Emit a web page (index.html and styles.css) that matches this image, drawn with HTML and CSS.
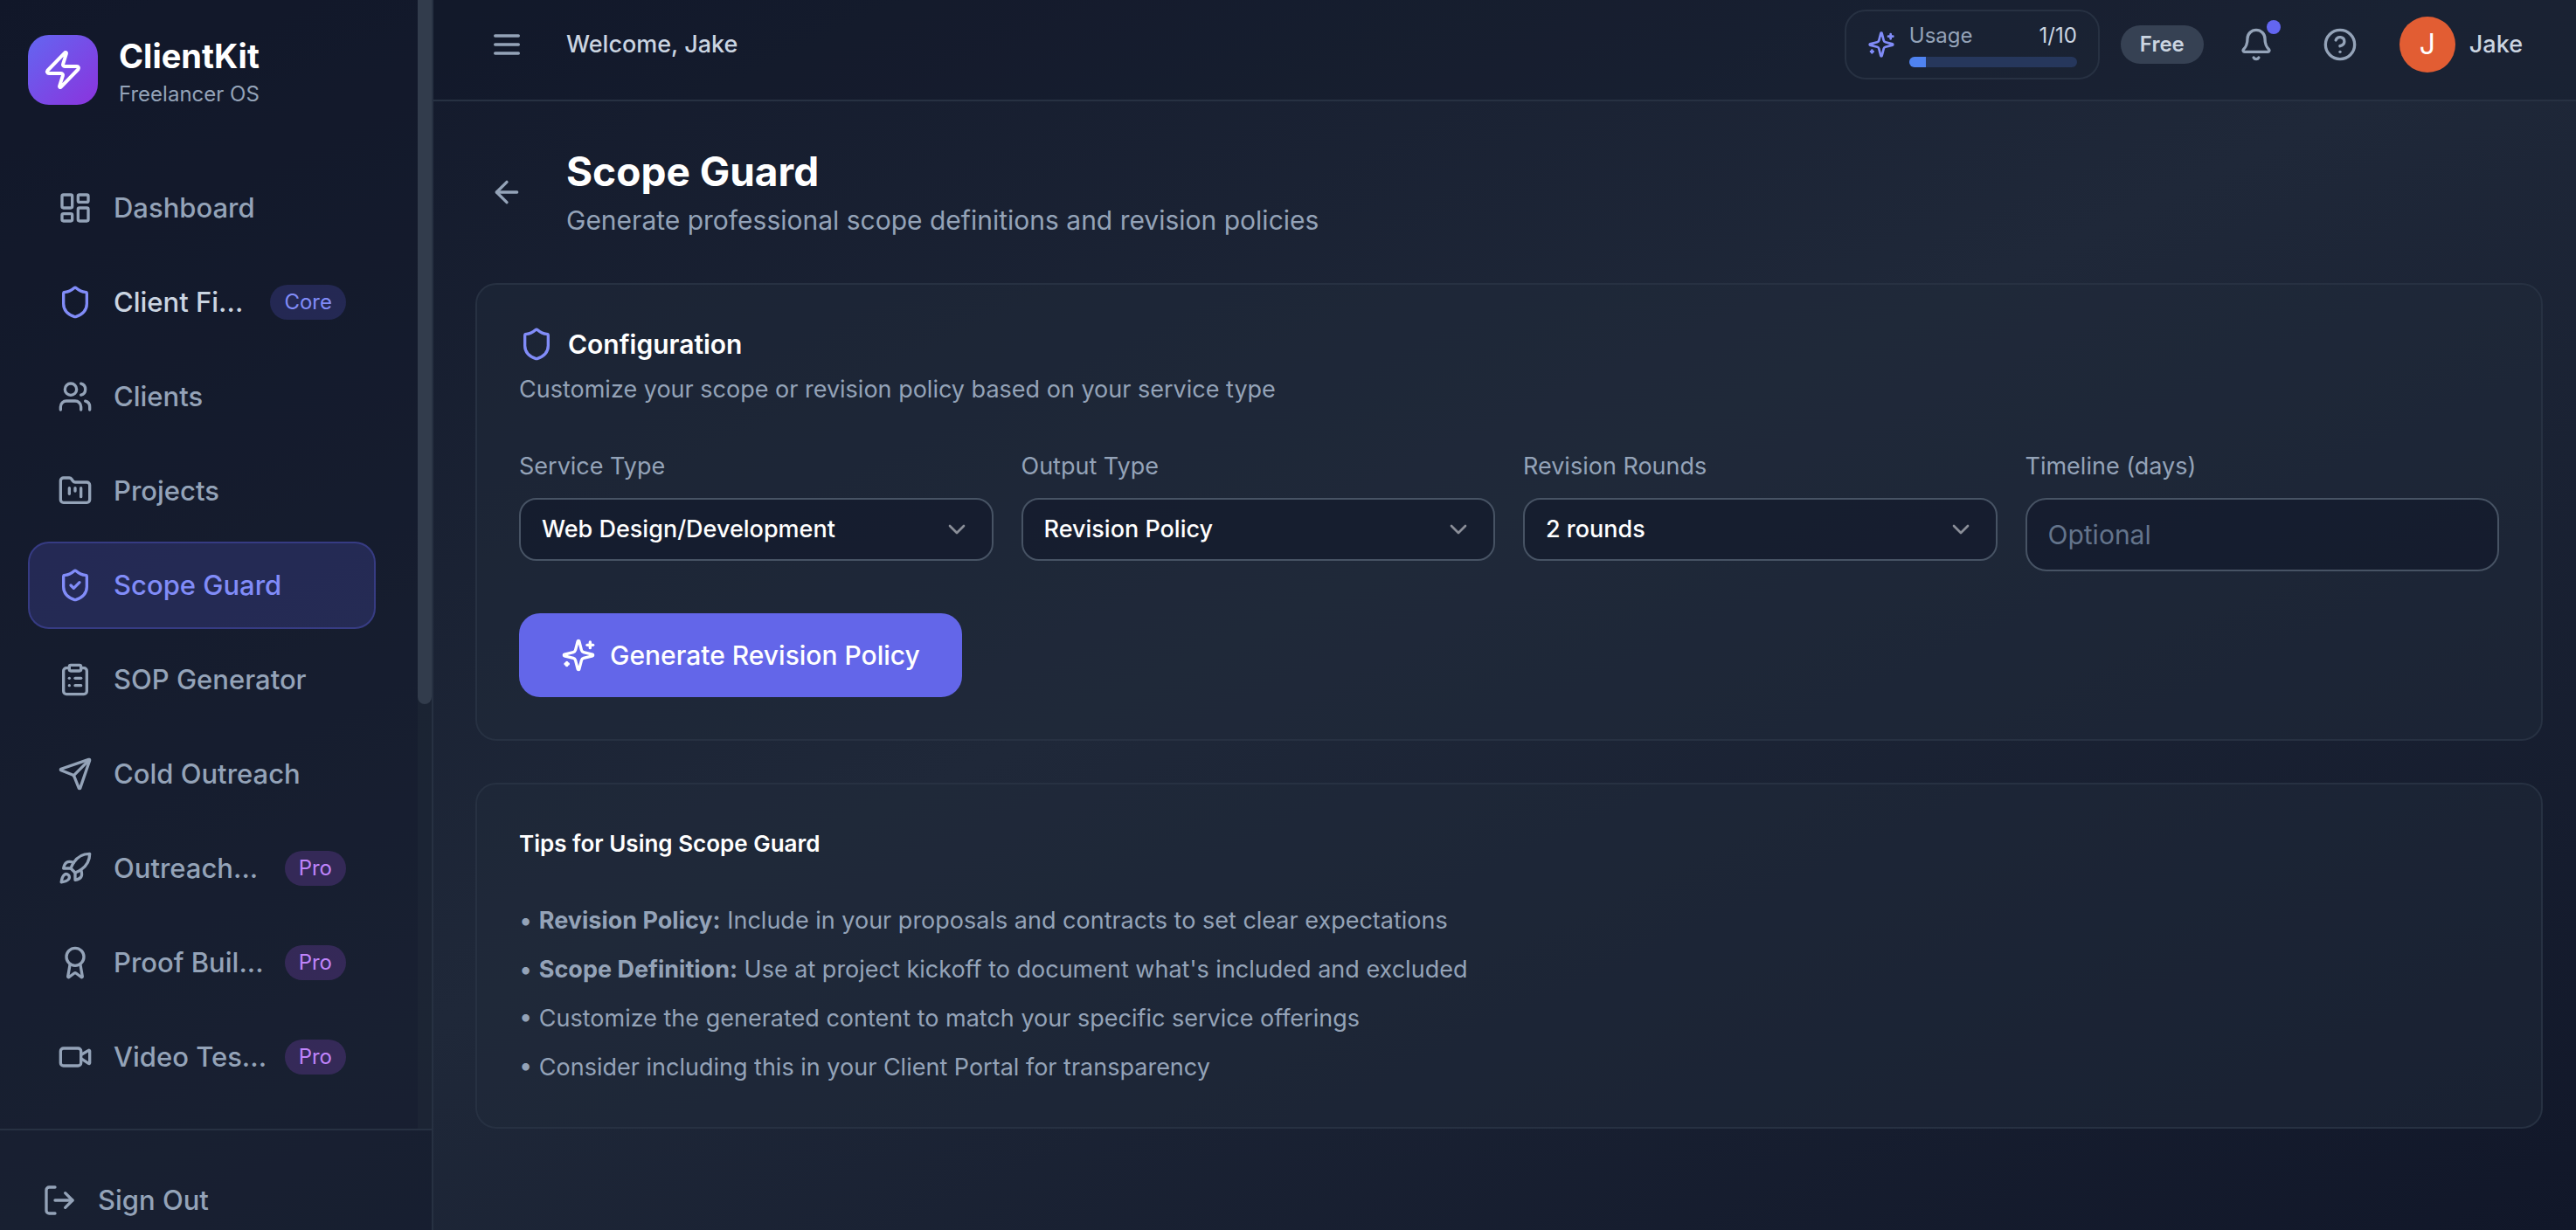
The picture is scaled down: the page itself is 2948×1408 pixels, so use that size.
FILE: index.html
```html
<!DOCTYPE html>
<html lang="en">
<head>
<meta charset="utf-8">
<meta name="viewport" content="width=device-width, initial-scale=1">
<title>Scope Guard - ClientKit</title>
<link rel="stylesheet" href="styles.css">
</head>
<body>
<svg class="sprite" aria-hidden="true">
  <symbol id="sparkles" viewBox="0 0 24 24"><path d="M9.937 15.5A2 2 0 0 0 8.5 14.063l-6.135-1.582a.5.5 0 0 1 0-.962L8.5 9.936A2 2 0 0 0 9.937 8.5l1.582-6.135a.5.5 0 0 1 .963 0L14.063 8.5A2 2 0 0 0 15.5 9.937l6.135 1.581a.5.5 0 0 1 0 .964L15.5 14.063a2 2 0 0 0-1.437 1.437l-1.582 6.135a.5.5 0 0 1-.963 0z"/><path d="M20 3v4"/><path d="M22 5h-4"/><path d="M4 17v2"/><path d="M5 18H3"/></symbol>
  <symbol id="shield" viewBox="0 0 24 24"><path d="M20 13c0 5-3.5 7.5-7.66 8.95a1 1 0 0 1-.67-.01C7.5 20.5 4 18 4 13V6a1 1 0 0 1 1-1c2 0 4.5-1.2 6.24-2.72a1.17 1.17 0 0 1 1.52 0C14.51 3.81 17 5 19 5a1 1 0 0 1 1 1z"/></symbol>
  <symbol id="chevron" viewBox="0 0 24 24"><path d="m6 9 6 6 6-6"/></symbol>
</svg>
<div class="app">
  <aside class="sidebar">
    <div class="sidebar-scroll">
      <div class="sidebar-content">
        <div class="brand">
          <span class="brand-logo"><svg class="icon icon-lg" viewBox="0 0 24 24"><path d="M4 14a1 1 0 0 1-.78-1.63l9.9-10.2a.5.5 0 0 1 .86.46l-1.92 6.02A1 1 0 0 0 13 10h7a1 1 0 0 1 .78 1.63l-9.9 10.2a.5.5 0 0 1-.86-.46l1.92-6.02A1 1 0 0 0 11 14z"/></svg></span>
          <div class="brand-text">
            <span class="brand-name">ClientKit</span>
            <span class="brand-tagline">Freelancer OS</span>
          </div>
        </div>
        <nav class="nav">
          <a class="nav-item" href="#"><svg class="icon" viewBox="0 0 24 24"><rect width="7" height="9" x="3" y="3" rx="1"/><rect width="7" height="5" x="14" y="3" rx="1"/><rect width="7" height="9" x="14" y="12" rx="1"/><rect width="7" height="5" x="3" y="16" rx="1"/></svg><span class="nav-label">Dashboard</span></a>
          <a class="nav-item nav-item-core" href="#"><svg class="icon"><use href="#shield"/></svg><span class="nav-label">Client Fi...</span><span class="badge badge-core">Core</span></a>
          <a class="nav-item" href="#"><svg class="icon" viewBox="0 0 24 24"><path d="M16 21v-2a4 4 0 0 0-4-4H6a4 4 0 0 0-4 4v2"/><circle cx="9" cy="7" r="4"/><path d="M22 21v-2a4 4 0 0 0-3-3.87"/><path d="M16 3.13a4 4 0 0 1 0 7.75"/></svg><span class="nav-label">Clients</span></a>
          <a class="nav-item" href="#"><svg class="icon" viewBox="0 0 24 24"><path d="M4 20h16a2 2 0 0 0 2-2V8a2 2 0 0 0-2-2h-7.93a2 2 0 0 1-1.66-.9l-.82-1.2A2 2 0 0 0 7.93 3H4a2 2 0 0 0-2 2v13c0 1.1.9 2 2 2Z"/><path d="M8 10v4"/><path d="M12 10v2"/><path d="M16 10v6"/></svg><span class="nav-label">Projects</span></a>
          <a class="nav-item nav-item-active" href="#" aria-current="page"><svg class="icon" viewBox="0 0 24 24"><path d="M20 13c0 5-3.5 7.5-7.66 8.95a1 1 0 0 1-.67-.01C7.5 20.5 4 18 4 13V6a1 1 0 0 1 1-1c2 0 4.5-1.2 6.24-2.72a1.17 1.17 0 0 1 1.52 0C14.51 3.81 17 5 19 5a1 1 0 0 1 1 1z"/><path d="m9 12 2 2 4-4"/></svg><span class="nav-label">Scope Guard</span></a>
          <a class="nav-item" href="#"><svg class="icon" viewBox="0 0 24 24"><rect width="8" height="4" x="8" y="2" rx="1"/><path d="M16 4h2a2 2 0 0 1 2 2v14a2 2 0 0 1-2 2H6a2 2 0 0 1-2-2V6a2 2 0 0 1 2-2h2"/><path d="M12 11h4"/><path d="M12 16h4"/><path d="M8 11h.01"/><path d="M8 16h.01"/></svg><span class="nav-label">SOP Generator</span></a>
          <a class="nav-item" href="#"><svg class="icon" viewBox="0 0 24 24"><path d="M14.536 21.686a.5.5 0 0 0 .937-.024l6.5-19a.496.496 0 0 0-.635-.635l-19 6.5a.5.5 0 0 0-.024.937l7.93 3.18a2 2 0 0 1 1.112 1.11z"/><path d="m21.854 2.147-10.94 10.939"/></svg><span class="nav-label">Cold Outreach</span></a>
          <a class="nav-item" href="#"><svg class="icon" viewBox="0 0 24 24"><path d="M4.5 16.5c-1.5 1.26-2 5-2 5s3.74-.5 5-2c.71-.84.7-2.13-.09-2.91a2.18 2.18 0 0 0-2.91-.09z"/><path d="m12 15-3-3a22 22 0 0 1 2-3.95A12.88 12.88 0 0 1 22 2c0 2.72-.78 7.5-6 11a22.35 22.35 0 0 1-4 2z"/><path d="M9 12H4s.55-3.03 2-4c1.62-1.08 5 0 5 0"/><path d="M12 15v5s3.03-.55 4-2c1.08-1.62 0-5 0-5"/></svg><span class="nav-label">Outreach...</span><span class="badge badge-pro">Pro</span></a>
          <a class="nav-item" href="#"><svg class="icon" viewBox="0 0 24 24"><path d="m15.477 12.89 1.515 8.526a.5.5 0 0 1-.81.47l-3.58-2.687a1 1 0 0 0-1.197 0l-3.586 2.686a.5.5 0 0 1-.81-.469l1.514-8.526"/><circle cx="12" cy="8" r="6"/></svg><span class="nav-label">Proof Buil...</span><span class="badge badge-pro">Pro</span></a>
          <a class="nav-item" href="#"><svg class="icon" viewBox="0 0 24 24"><path d="m16 13 5.223 3.482a.5.5 0 0 0 .777-.416V7.87a.5.5 0 0 0-.752-.432L16 10.5"/><rect x="2" y="6" width="14" height="12" rx="2"/></svg><span class="nav-label">Video Tes...</span><span class="badge badge-pro">Pro</span></a>
        </nav>
      </div>
      <div class="scrollbar"><div class="scrollbar-thumb"></div><div class="scrollbar-rest"></div></div>
    </div>
    <div class="sidebar-footer">
      <button class="signout" type="button"><svg class="icon" viewBox="0 0 24 24"><path d="m16 17 5-5-5-5"/><path d="M21 12H9"/><path d="M9 21H5a2 2 0 0 1-2-2V5a2 2 0 0 1 2-2h4"/></svg>Sign Out</button>
    </div>
  </aside>

  <div class="page">
    <header class="topbar">
      <button class="icon-button" type="button" aria-label="Menu"><svg class="icon" viewBox="0 0 24 24"><path d="M4 6h16"/><path d="M4 12h16"/><path d="M4 18h16"/></svg></button>
      <span class="welcome">Welcome, Jake</span>
      <div class="topbar-actions">
        <div class="usage">
          <svg class="icon icon-sm"><use href="#sparkles"/></svg>
          <div class="usage-body">
            <div class="usage-row"><span>Usage</span><span class="usage-count">1/10</span></div>
            <div class="usage-track"><div class="usage-fill" style="width:10%"></div></div>
          </div>
        </div>
        <span class="plan">Free</span>
        <button class="icon-button" type="button" aria-label="Notifications"><svg class="icon" viewBox="0 0 24 24"><path d="M10.268 21a2 2 0 0 0 3.464 0"/><path d="M3.262 15.326A1 1 0 0 0 4 17h16a1 1 0 0 0 .74-1.673C19.41 13.956 18 12.499 18 8A6 6 0 0 0 6 8c0 4.499-1.411 5.956-2.738 7.326"/></svg><span class="dot"></span></button>
        <button class="icon-button" type="button" aria-label="Help"><svg class="icon" viewBox="0 0 24 24"><circle cx="12" cy="12" r="10"/><path d="M9.09 9a3 3 0 0 1 5.83 1c0 2-3 3-3 3"/><path d="M12 17h.01"/></svg></button>
        <button class="account" type="button"><span class="avatar">J</span><span>Jake</span></button>
      </div>
    </header>

    <main class="main">
      <div class="page-head">
        <button class="icon-button" type="button" aria-label="Back"><svg class="icon" viewBox="0 0 24 24"><path d="m12 19-7-7 7-7"/><path d="M19 12H5"/></svg></button>
        <div>
          <h1 class="page-title">Scope Guard</h1>
          <p class="page-subtitle">Generate professional scope definitions and revision policies</p>
        </div>
      </div>

      <section class="card">
        <div class="card-head">
          <h2 class="card-title"><svg class="icon"><use href="#shield"/></svg>Configuration</h2>
          <p class="card-text">Customize your scope or revision policy based on your service type</p>
        </div>
        <form class="form">
          <div class="fields">
            <div class="field">
              <label for="service">Service Type</label>
              <div class="select"><select id="service"><option>Web Design/Development</option></select><svg class="icon icon-sm"><use href="#chevron"/></svg></div>
            </div>
            <div class="field">
              <label for="output">Output Type</label>
              <div class="select"><select id="output"><option>Revision Policy</option></select><svg class="icon icon-sm"><use href="#chevron"/></svg></div>
            </div>
            <div class="field">
              <label for="rounds">Revision Rounds</label>
              <div class="select"><select id="rounds"><option>2 rounds</option></select><svg class="icon icon-sm"><use href="#chevron"/></svg></div>
            </div>
            <div class="field">
              <label for="timeline">Timeline (days)</label>
              <input id="timeline" type="text" inputmode="numeric" placeholder="Optional">
            </div>
          </div>
          <button class="primary" type="button"><svg class="icon"><use href="#sparkles"/></svg>Generate Revision Policy</button>
        </form>
      </section>

      <section class="card">
        <h2 class="tips-title">Tips for Using Scope Guard</h2>
        <ul class="tips">
          <li>• <strong>Revision Policy:</strong> Include in your proposals and contracts to set clear expectations</li>
          <li>• <strong>Scope Definition:</strong> Use at project kickoff to document what's included and excluded</li>
          <li>• Customize the generated content to match your specific service offerings</li>
          <li>• Consider including this in your Client Portal for transparency</li>
        </ul>
      </section>
    </main>
  </div>
</div>
</body>
</html>
```
FILE: styles.css
```css
:root {
  --muted: #94a3b8;
  --soft: #cbd5e1;
  --indigo: #818cf8;
  --line: #273142;
}

* { box-sizing: border-box; }

body, h1, h2, p, ul { margin: 0; padding: 0; }

body {
  font-family: Inter, "Liberation Sans", sans-serif;
  font-size: 27px;
  line-height: 40px;
  color: var(--muted);
  background: #111827;
}

button, input, select { font: inherit; color: inherit; }

button {
  border: 0;
  background: none;
  cursor: pointer;
}

a { color: inherit; text-decoration: none; }

.sprite { display: none; }

.icon {
  flex: none;
  width: 40px;
  height: 40px;
  fill: none;
  stroke: currentColor;
  stroke-width: 2;
  stroke-linecap: round;
  stroke-linejoin: round;
}
.icon-sm { width: 32px; height: 32px; }
.icon-lg { width: 48px; height: 48px; }

.app {
  display: flex;
  height: 100vh;
  overflow: hidden;
  background: linear-gradient(to bottom right, #111729, #1f2839, #111729);
}

/* Sidebar */
.sidebar {
  flex: none;
  display: flex;
  flex-direction: column;
  width: 496px;
  border-right: 2px solid var(--line);
  background: rgba(17, 23, 41, 0.5);
}

.sidebar-scroll {
  flex: 1;
  min-height: 0;
  display: flex;
  overflow: hidden;
}

.sidebar-content {
  flex: 1;
  min-width: 0;
  padding: 40px 48px 0 32px;
}

.brand {
  display: flex;
  align-items: flex-start;
  gap: 24px;
  margin-bottom: 60px;
}

.brand-logo {
  display: grid;
  place-items: center;
  width: 80px;
  height: 80px;
  border-radius: 24px;
  color: #fff;
  background: linear-gradient(to bottom right, #6366f1, #8b33dd);
}

.brand-text { display: flex; flex-direction: column; }

.brand-name {
  font-size: 38px;
  line-height: 48px;
  font-weight: 700;
  color: #fff;
}

.brand-tagline { font-size: 24px; }

.nav {
  display: flex;
  flex-direction: column;
  gap: 8px;
}

.nav-item {
  display: flex;
  align-items: center;
  gap: 24px;
  height: 100px;
  padding: 0 32px;
  border: 2px solid transparent;
  border-radius: 24px;
  font-size: 31px;
  font-weight: 500;
}

.nav-label {
  flex: 1;
  min-width: 0;
  white-space: nowrap;
}

.nav-item-core { color: var(--soft); }
.nav-item-core .icon { color: var(--indigo); }

.nav-item-active {
  color: var(--indigo);
  background: rgba(99, 102, 241, 0.2);
  border-color: rgba(99, 102, 241, 0.3);
}

.badge {
  padding: 0 16px;
  border-radius: 20px;
  font-size: 24px;
  font-weight: 400;
}
.badge-core { color: var(--indigo); background: rgba(99, 102, 241, 0.2); }
.badge-pro { color: #c084fc; background: rgba(168, 85, 247, 0.2); }

.scrollbar {
  flex: none;
  display: flex;
  flex-direction: column;
  width: 16px;
  background: rgba(31, 41, 55, 0.5);
}
.scrollbar-thumb {
  flex: 806;
  border-radius: 0 0 8px 8px;
  background: #323c4c;
}
.scrollbar-rest { flex: 486; }

.sidebar-footer {
  padding: 48px 32px 2px;
  border-top: 2px solid var(--line);
}

.signout {
  display: flex;
  align-items: center;
  gap: 24px;
  width: 100%;
  height: 64px;
  padding: 0 16px;
  font-size: 31px;
  font-weight: 500;
}

/* Top bar */
.page {
  flex: 1;
  min-width: 0;
  display: flex;
  flex-direction: column;
}

.topbar {
  display: flex;
  align-items: center;
  gap: 32px;
  padding: 11px 48px 23px;
  border-bottom: 2px solid var(--line);
  background: rgba(17, 23, 41, 0.3);
}

.icon-button {
  position: relative;
  display: flex;
  padding: 16px;
  border-radius: 16px;
}

.welcome {
  font-weight: 500;
  color: var(--soft);
}

.topbar-actions {
  display: flex;
  align-items: center;
  gap: 24px;
  margin-left: auto;
}

.usage {
  display: flex;
  align-items: center;
  gap: 16px;
  padding: 12px 24px;
  border: 2px solid var(--line);
  border-radius: 24px;
  background: rgba(31, 41, 56, 0.3);
}
.usage > .icon { color: var(--indigo); }

.usage-body {
  display: flex;
  flex-direction: column;
  gap: 8px;
  width: 192px;
}

.usage-row {
  display: flex;
  justify-content: space-between;
  font-size: 24px;
  line-height: 32px;
}
.usage-count { color: var(--soft); }

.usage-track {
  height: 12px;
  border-radius: 6px;
  overflow: hidden;
  background: #26375c;
}
.usage-fill {
  height: 100%;
  background: #4f83f1;
}

.plan {
  padding: 2px 22px;
  border-radius: 22px;
  font-size: 24px;
  font-weight: 600;
  color: var(--soft);
  background: #364153;
}

.dot {
  position: absolute;
  top: 8px;
  right: 8px;
  width: 16px;
  height: 16px;
  border-radius: 50%;
  background: #6366f1;
}

.account {
  display: flex;
  align-items: center;
  gap: 16px;
  padding: 8px 13px 8px 8px;
  font-weight: 500;
  color: var(--soft);
}

.avatar {
  display: grid;
  place-items: center;
  width: 64px;
  height: 64px;
  border-radius: 50%;
  font-size: 32px;
  font-weight: 400;
  color: #fff;
  background: #e25d33;
}

/* Main column */
.main {
  display: flex;
  flex-direction: column;
  gap: 48px;
  padding: 48px 38px 48px 48px;
}

.page-head {
  display: flex;
  align-items: center;
  gap: 32px;
}

.page-title {
  font-size: 46px;
  line-height: 64px;
  font-weight: 700;
  color: #fff;
}

.page-subtitle {
  font-size: 30px;
  line-height: 48px;
}

.card {
  display: flex;
  flex-direction: column;
  gap: 48px;
  padding: 48px;
  border: 2px solid var(--line);
  border-radius: 24px;
  background: rgba(32, 41, 58, 0.5);
}

.card-head {
  display: flex;
  flex-direction: column;
  gap: 12px;
}

.card-title {
  display: flex;
  align-items: center;
  gap: 16px;
  font-size: 30px;
  font-weight: 600;
  color: #fff;
}
.card-title .icon { color: var(--indigo); }

.form {
  display: flex;
  flex-direction: column;
  align-items: flex-start;
  gap: 48px;
}

.fields {
  display: grid;
  grid-template-columns: repeat(4, 1fr);
  align-items: start;
  gap: 32px;
  width: 100%;
}

.field {
  display: flex;
  flex-direction: column;
  gap: 16px;
}

.select {
  position: relative;
  display: flex;
}

.select select {
  appearance: none;
  width: 100%;
  height: 72px;
  padding: 0 72px 0 24px;
  border: 2px solid #475364;
  border-radius: 20px;
  font-weight: 500;
  color: #fff;
  background: rgba(17, 23, 41, 0.6);
}

.select .icon {
  position: absolute;
  top: 20px;
  right: 26px;
  color: #8a8e98;
  pointer-events: none;
}

.field input {
  width: 100%;
  height: 84px;
  padding: 0 24px;
  border: 2px solid #475364;
  border-radius: 24px;
  font-size: 30px;
  color: #fff;
  background: rgba(17, 23, 41, 0.6);
}
.field input::placeholder { color: #64748b; }

.primary {
  display: flex;
  align-items: center;
  gap: 16px;
  height: 96px;
  padding: 0 48px;
  border-radius: 24px;
  font-size: 30px;
  font-weight: 500;
  color: #fff;
  background: #6366e9;
}

.tips-title {
  font-size: 26px;
  font-weight: 600;
  color: #fff;
}

.tips {
  display: flex;
  flex-direction: column;
  gap: 16px;
  list-style: none;
}
```
